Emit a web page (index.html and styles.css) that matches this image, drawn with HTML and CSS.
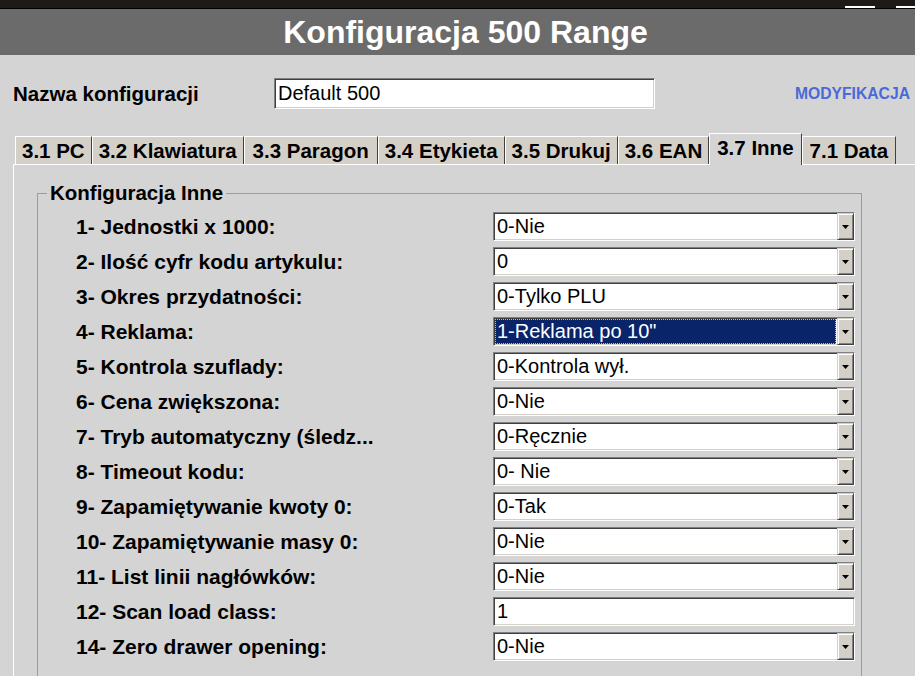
FILE: index.html
```html
<!DOCTYPE html>
<html lang="pl">
<head>
<meta charset="utf-8">
<title>Konfiguracja 500 Range</title>
<link rel="stylesheet" href="styles.css">
</head>
<body>
<div class="topbar"><span class="mark mark-a"></span><span class="mark mark-b"></span></div>
<header class="titlebar">Konfiguracja 500 Range</header>
<div class="namerow">
  <span class="name-label">Nazwa konfiguracji</span>
  <div class="field name-field"><span class="field-text">Default 500</span></div>
  <span class="modlink">MODYFIKACJA</span>
</div>
<nav class="tabs">
  <span class="tab">3.1 PC</span>
  <span class="tab">3.2 Klawiatura</span>
  <span class="tab tab-wide">3.3 Paragon</span>
  <span class="tab">3.4 Etykieta</span>
  <span class="tab">3.5 Drukuj</span>
  <span class="tab">3.6 EAN</span>
  <span class="tab tab-active">3.7 Inne</span>
  <span class="tab tab-last">7.1 Data</span>
</nav>
<main class="panel">
  <fieldset class="group">
    <legend class="group-title">Konfiguracja Inne</legend>
    <div class="rows">
      <div class="label">1- Jednostki x 1000:</div>
      <div class="field combo"><span class="field-text">0-Nie</span><span class="combo-btn"><svg width="7" height="4" viewBox="0 0 7 4"><path d="M0 0H7L3.5 4Z"/></svg></span></div>

      <div class="label">2- Ilość cyfr kodu artykulu:</div>
      <div class="field combo"><span class="field-text">0</span><span class="combo-btn"><svg width="7" height="4" viewBox="0 0 7 4"><path d="M0 0H7L3.5 4Z"/></svg></span></div>

      <div class="label">3- Okres przydatności:</div>
      <div class="field combo"><span class="field-text">0-Tylko PLU</span><span class="combo-btn"><svg width="7" height="4" viewBox="0 0 7 4"><path d="M0 0H7L3.5 4Z"/></svg></span></div>

      <div class="label">4- Reklama:</div>
      <div class="field combo"><span class="field-text field-selected">1-Reklama po 10"</span><span class="combo-btn"><svg width="7" height="4" viewBox="0 0 7 4"><path d="M0 0H7L3.5 4Z"/></svg></span></div>

      <div class="label">5- Kontrola szuflady:</div>
      <div class="field combo"><span class="field-text">0-Kontrola wył.</span><span class="combo-btn"><svg width="7" height="4" viewBox="0 0 7 4"><path d="M0 0H7L3.5 4Z"/></svg></span></div>

      <div class="label">6- Cena zwiększona:</div>
      <div class="field combo"><span class="field-text">0-Nie</span><span class="combo-btn"><svg width="7" height="4" viewBox="0 0 7 4"><path d="M0 0H7L3.5 4Z"/></svg></span></div>

      <div class="label">7- Tryb automatyczny (śledz...</div>
      <div class="field combo"><span class="field-text">0-Ręcznie</span><span class="combo-btn"><svg width="7" height="4" viewBox="0 0 7 4"><path d="M0 0H7L3.5 4Z"/></svg></span></div>

      <div class="label">8- Timeout kodu:</div>
      <div class="field combo"><span class="field-text">0- Nie</span><span class="combo-btn"><svg width="7" height="4" viewBox="0 0 7 4"><path d="M0 0H7L3.5 4Z"/></svg></span></div>

      <div class="label">9- Zapamiętywanie kwoty 0:</div>
      <div class="field combo"><span class="field-text">0-Tak</span><span class="combo-btn"><svg width="7" height="4" viewBox="0 0 7 4"><path d="M0 0H7L3.5 4Z"/></svg></span></div>

      <div class="label">10- Zapamiętywanie masy 0:</div>
      <div class="field combo"><span class="field-text">0-Nie</span><span class="combo-btn"><svg width="7" height="4" viewBox="0 0 7 4"><path d="M0 0H7L3.5 4Z"/></svg></span></div>

      <div class="label">11- List linii nagłówków:</div>
      <div class="field combo"><span class="field-text">0-Nie</span><span class="combo-btn"><svg width="7" height="4" viewBox="0 0 7 4"><path d="M0 0H7L3.5 4Z"/></svg></span></div>

      <div class="label">12- Scan load class:</div>
      <div class="field combo"><span class="field-text">1</span></div>

      <div class="label">14- Zero drawer opening:</div>
      <div class="field combo"><span class="field-text">0-Nie</span><span class="combo-btn"><svg width="7" height="4" viewBox="0 0 7 4"><path d="M0 0H7L3.5 4Z"/></svg></span></div>
    </div>
  </fieldset>
</main>
</body>
</html>
```
FILE: styles.css
```css
html, body {
  margin: 0;
  padding: 0;
}
body {
  width: 915px;
  height: 676px;
  overflow: hidden;
  background: #d4d4d4;
  font-family: "Liberation Sans", Arial, sans-serif;
  color: #000;
  display: flex;
  flex-direction: column;
}

/* top window strip */
.topbar {
  height: 8px;
  flex: none;
  background: #1d1a17;
  border-bottom: 1px solid #000;
  display: flex;
  justify-content: flex-end;
  align-items: flex-end;
}
.mark {
  height: 2px;
  background: #fff;
}
.mark-a { width: 30px; margin-right: 21px; }
.mark-b { width: 19px; }

/* title */
.titlebar {
  flex: none;
  height: 46px;
  line-height: 46px;
  background: #6b6b6b;
  color: #fff;
  font-size: 32px;
  font-weight: bold;
  text-align: center;
  padding-left: 16px;
}

/* name row */
.namerow {
  flex: none;
  display: flex;
  align-items: center;
  margin-top: 23px;
  height: 31px;
  padding-left: 13px;
}
.name-label {
  width: 261px;
  font-size: 20.5px;
  font-weight: bold;
}
.name-field {
  width: 381px;
  height: 31px;
}
.modlink {
  margin-left: auto;
  padding-right: 5px;
  font-size: 15.7px;
  font-weight: bold;
  color: #4a6ad9;
}

/* generic sunken field */
.field {
  box-sizing: border-box;
  display: flex;
  align-items: stretch;
  background: #fff;
  border: 1px solid;
  border-color: #808080 #fff #fff #808080;
  box-shadow: inset 1px 1px 0 #404040, inset -1px -1px 0 #d4d0c8;
}
.field-text {
  flex: 1;
  display: flex;
  align-items: center;
  padding-left: 3px;
  font-size: 20px;
  white-space: nowrap;
  overflow: hidden;
}
.field-selected {
  margin: 1px;
  padding-left: 2px;
  background: #0a246a;
  color: #fff;
  outline: 1px dotted #c8c0a0;
  outline-offset: -1px;
}

/* tabs */
.tabs {
  flex: none;
  display: flex;
  align-items: flex-end;
  margin-top: 24px;
  height: 31px;
  padding-left: 15px;
}
.tab {
  box-sizing: border-box;
  height: 28px;
  padding: 0 6px;
  display: flex;
  align-items: center;
  background: #d4d0c8;
  border-top: 1px solid #fff;
  border-left: 1px solid #fff;
  border-right: 1px solid #404040;
  font-size: 20.5px;
  font-weight: bold;
  white-space: nowrap;
}
.tab-wide {
  padding: 0 8px;
}
.tab-last {
  padding: 0 7px;
}
.tab-active {
  position: relative;
  height: 32px;
  margin-bottom: -1px;
  padding: 0 7px 4px 7px;
  background: #d4d4d4;
}

/* panel */
.panel {
  flex: 1;
  margin-left: 13px;
  border-top: 1px solid #fff;
  border-left: 1px solid #fff;
  padding-left: 23px;
}

.group {
  box-sizing: border-box;
  width: 825px;
  margin: 18px 0 0 0;
  padding: 0 0 40px 0;
  border: 1px solid #9c9c9c;
  min-width: 0;
}
.group-title {
  margin-left: 9px;
  padding: 0 3px;
  font-size: 20.5px;
  line-height: 20px;
  font-weight: bold;
}

.rows {
  display: grid;
  grid-template-columns: 417px 362px;
  grid-auto-rows: 29px;
  row-gap: 6px;
  align-items: center;
  padding: 9px 0 0 38px;
}
.label {
  font-size: 21px;
  line-height: 21px;
  font-weight: bold;
  white-space: nowrap;
}
.combo {
  height: 29px;
}
.combo-btn {
  box-sizing: border-box;
  width: 17px;
  flex: none;
  display: flex;
  align-items: center;
  justify-content: center;
  background: #d4d0c8;
  border: 1px solid;
  border-color: #d4d0c8 #404040 #404040 #d4d0c8;
  box-shadow: inset 1px 1px 0 #fff, inset -1px -1px 0 #808080;
}
.combo-btn svg {
  display: block;
  fill: #000;
}
```
